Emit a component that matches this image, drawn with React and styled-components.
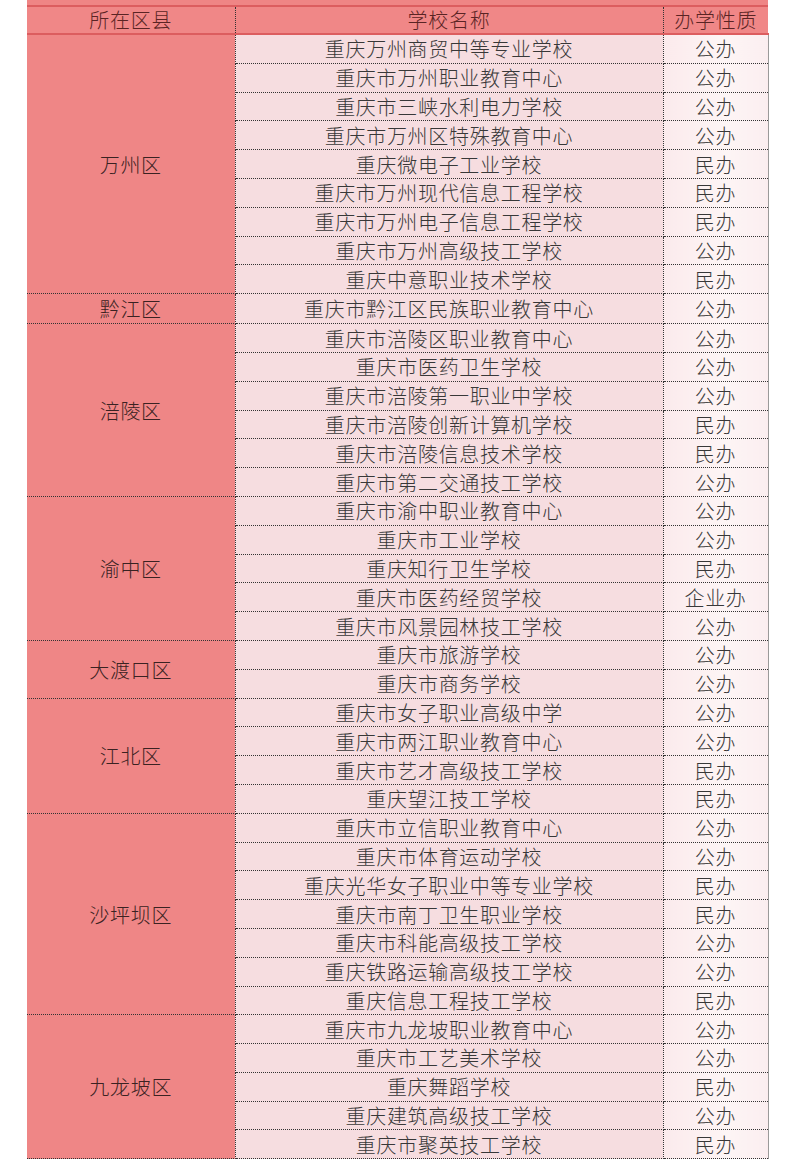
import React from "react";
import styled, { createGlobalStyle } from "styled-components";

const GlobalStyle = createGlobalStyle`
  body {
    margin: 0;
    background: #ffffff;
    font-family: "Noto Sans CJK SC", "Noto Sans", sans-serif;
  }
`;

const data = [
  {
    district: "万州区",
    schools: [
      ["重庆万州商贸中等专业学校", "公办"],
      ["重庆市万州职业教育中心", "公办"],
      ["重庆市三峡水利电力学校", "公办"],
      ["重庆市万州区特殊教育中心", "公办"],
      ["重庆微电子工业学校", "民办"],
      ["重庆市万州现代信息工程学校", "民办"],
      ["重庆市万州电子信息工程学校", "民办"],
      ["重庆市万州高级技工学校", "公办"],
      ["重庆中意职业技术学校", "民办"],
    ],
  },
  {
    district: "黔江区",
    schools: [["重庆市黔江区民族职业教育中心", "公办"]],
  },
  {
    district: "涪陵区",
    schools: [
      ["重庆市涪陵区职业教育中心", "公办"],
      ["重庆市医药卫生学校", "公办"],
      ["重庆市涪陵第一职业中学校", "公办"],
      ["重庆市涪陵创新计算机学校", "民办"],
      ["重庆市涪陵信息技术学校", "民办"],
      ["重庆市第二交通技工学校", "公办"],
    ],
  },
  {
    district: "渝中区",
    schools: [
      ["重庆市渝中职业教育中心", "公办"],
      ["重庆市工业学校", "公办"],
      ["重庆知行卫生学校", "民办"],
      ["重庆市医药经贸学校", "企业办"],
      ["重庆市风景园林技工学校", "公办"],
    ],
  },
  {
    district: "大渡口区",
    schools: [
      ["重庆市旅游学校", "公办"],
      ["重庆市商务学校", "公办"],
    ],
  },
  {
    district: "江北区",
    schools: [
      ["重庆市女子职业高级中学", "公办"],
      ["重庆市两江职业教育中心", "公办"],
      ["重庆市艺才高级技工学校", "民办"],
      ["重庆望江技工学校", "民办"],
    ],
  },
  {
    district: "沙坪坝区",
    schools: [
      ["重庆市立信职业教育中心", "公办"],
      ["重庆市体育运动学校", "公办"],
      ["重庆光华女子职业中等专业学校", "民办"],
      ["重庆市南丁卫生职业学校", "民办"],
      ["重庆市科能高级技工学校", "公办"],
      ["重庆铁路运输高级技工学校", "公办"],
      ["重庆信息工程技工学校", "民办"],
    ],
  },
  {
    district: "九龙坡区",
    schools: [
      ["重庆市九龙坡职业教育中心", "公办"],
      ["重庆市工艺美术学校", "公办"],
      ["重庆舞蹈学校", "民办"],
      ["重庆建筑高级技工学校", "公办"],
      ["重庆市聚英技工学校", "民办"],
    ],
  },
];

const Page = styled.div`
  padding-left: 27px;
  width: 741px;
`;

const TopBand = styled.div`
  height: 5px;
  background: #ef8585;
  border-bottom: 2px solid #dc5d5f;
`;

const Table = styled.table`
  width: 741px;
  border-collapse: collapse;
  table-layout: fixed;
  font-size: 20px;
  font-weight: 300;
  letter-spacing: 0.7px;
  color: #383838;
`;

const HeadCell = styled.th`
  height: 26px;
  padding: 0;
  font-weight: 300;
  color: #5a2424;
  background: #f08787;
  border-bottom: 2px solid #dc5d5f;
  border-left: ${(p) => (p.$first ? "none" : "1px dotted #333")};
  line-height: 26px;
  text-align: center;
`;

const DistrictCell = styled.td`
  padding: 0;
  background: #ef8686;
  color: #3a2222;
  text-align: center;
  vertical-align: middle;
  border-bottom: 1px dotted #333;
  border-right: 1px dotted #333;
`;

const NameCell = styled.td`
  height: 27.8px;
  padding: 0;
  background: #f6dde0;
  text-align: center;
  line-height: 27px;
  border-bottom: 1px dotted #333;
  border-right: 1px dotted #333;
  white-space: nowrap;
`;

const TypeCell = styled.td`
  padding: 0;
  background: linear-gradient(90deg, #fbeaec, #fdf5f5 60%, #fbeef0);
  text-align: center;
  line-height: 27px;
  border-bottom: 1px dotted #333;
  border-right: 1px solid #9a9a9a;
`;

export default function App() {
  return (
    <Page>
      <GlobalStyle />
      <TopBand />
      <Table>
        <colgroup>
          <col style={{ width: 208 }} />
          <col style={{ width: 428 }} />
          <col style={{ width: 105 }} />
        </colgroup>
        <thead>
          <tr>
            <HeadCell $first>所在区县</HeadCell>
            <HeadCell>学校名称</HeadCell>
            <HeadCell>办学性质</HeadCell>
          </tr>
        </thead>
        <tbody>
          {data.map((group) =>
            group.schools.map(([name, type], i) => (
              <tr key={name}>
                {i === 0 && (
                  <DistrictCell rowSpan={group.schools.length}>
                    {group.district}
                  </DistrictCell>
                )}
                <NameCell>{name}</NameCell>
                <TypeCell>{type}</TypeCell>
              </tr>
            ))
          )}
        </tbody>
      </Table>
    </Page>
  );
}
